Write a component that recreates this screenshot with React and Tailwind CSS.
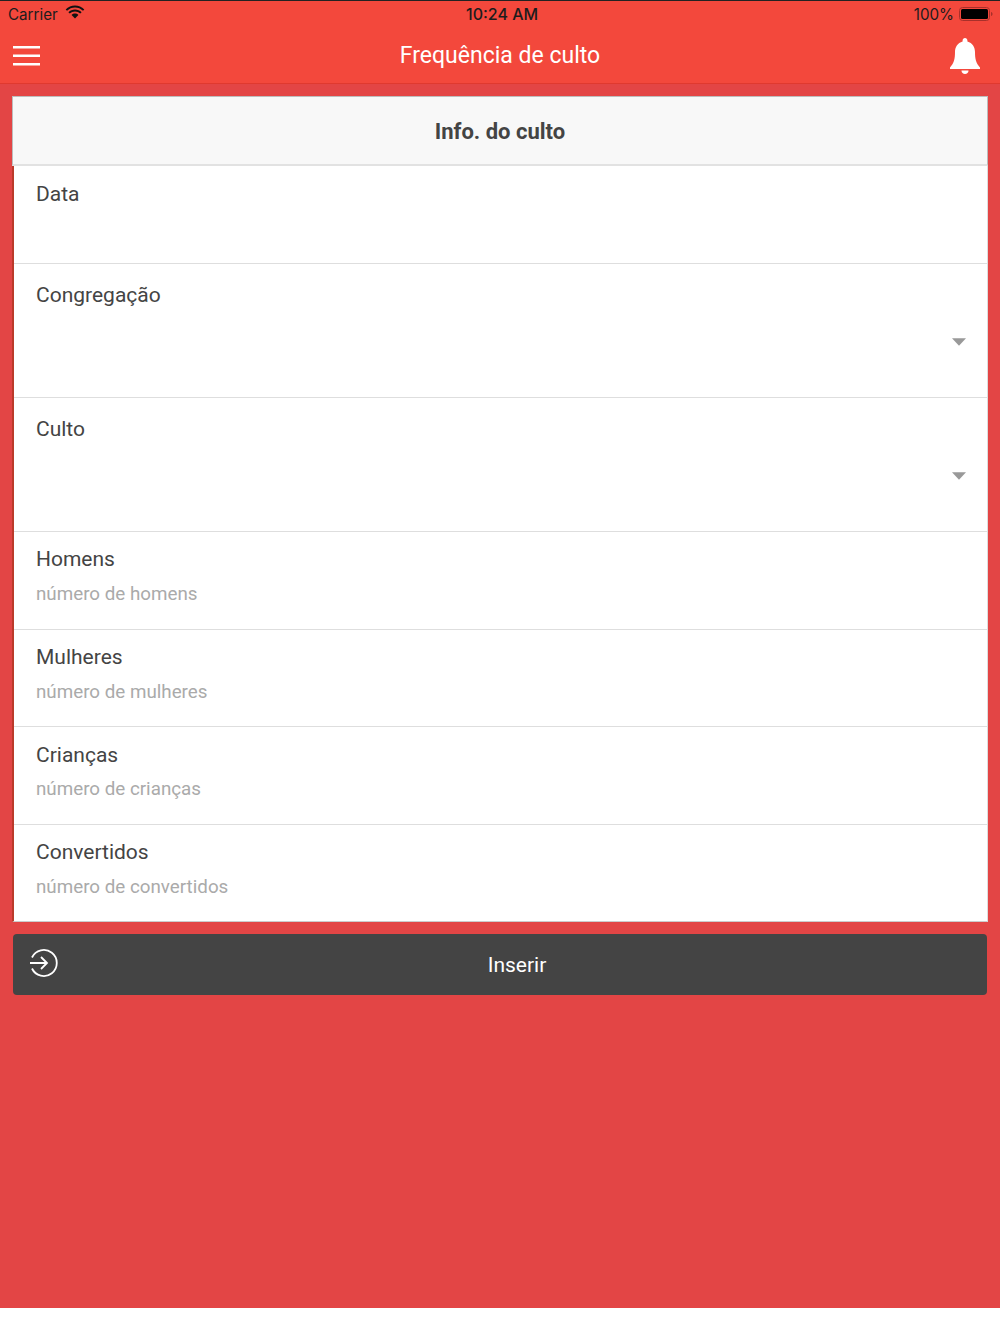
function Linha({ label, placeholder, altura, labelTop, gap, caretTop }) {
  return (
    <div className={`relative border-b border-b-[#dedede] ${altura} ${labelTop} pl-[22px]`}>
      <div className="text-[21px] leading-[28px] text-[#444]">{label}</div>
      {placeholder && <div className={`${gap} text-[18.800px] leading-[28px] text-[#aaa]`}>{placeholder}</div>}
      {caretTop && (
        <svg width="14" height="8" viewBox="0 0 13 7" className={`absolute right-[21px] ${caretTop}`}>
          <path d="M0 0h13L6.500 7z" fill="#999" />
        </svg>
      )}
    </div>
  );
}

export default function App() {
  return (
    <div className="flex h-[1334px] flex-col bg-white font-['Roboto',sans-serif]">
      <div className="flex h-[1308px] flex-col bg-[#e34545]">
        <div className="h-[84px] shrink-0 border-t border-t-[#222] border-b border-b-[#e0392f] bg-[#f3483c]">
          <div className="relative flex h-[26px] items-center justify-between pl-[8px] pr-[7px] pt-[2px] font-['Inter',sans-serif] text-[15.200px] text-[#1c1c1c]">
            <div className="flex items-center gap-[7px]">
              <span>Carrier</span>
              <svg width="20" height="15" viewBox="0 0 20 15" className="mb-[5px]">
                <path d="M10 2.500c3 0 5.800 1.200 8 3.300l1.300-1.400C16.800 2 13.500.600 10 .600S3.200 2 .700 4.400L2 5.800c2.200-2.100 5-3.300 8-3.300z" fill="#111" />
                <path d="M10 6.500c2 0 3.800.800 5.200 2.100l1.400-1.400C14.800 5.500 12.500 4.500 10 4.500s-4.800 1-6.600 2.700l1.400 1.400C6.200 7.300 8 6.500 10 6.500z" fill="#111" />
                <path d="M10 8.500c-1.300 0-2.500.500-3.400 1.400L10 13.500l3.400-3.600c-.9-.9-2.100-1.400-3.400-1.400z" fill="#111" />
              </svg>
            </div>
            <span className="absolute left-[466px] top-0 text-[16px] font-medium leading-[26px]">10:24 AM</span>
            <div className="flex items-center gap-[5px]">
              <span>100%</span>
              <svg width="34" height="14" viewBox="0 0 34 14" className="mb-[2px]">
                <rect x=".5" y=".5" width="30" height="13" rx="3" fill="none" stroke="#a8302a" />
                <rect x="2" y="2" width="27" height="10" rx="1.500" fill="#000" />
                <path d="M32 5c1 .3 1.500 1 1.500 2s-.5 1.700-1.500 2z" fill="#a8302a" />
              </svg>
            </div>
          </div>
          <div className="relative flex h-[56px] items-center justify-center pt-[2px]">
            <svg width="27" height="20" viewBox="0 0 27 20" className="absolute left-[13px] top-[19px]">
              <rect x="0" y="0" width="27" height="2.500" fill="#fff" />
              <rect x="0" y="8.500" width="27" height="2.500" fill="#fff" />
              <rect x="0" y="17" width="27" height="2.500" fill="#fff" />
            </svg>
            <span className="text-[23px] text-white">Frequência de culto</span>
            <svg width="30" height="36" viewBox="0 0 30 36" className="absolute right-[20px] top-[11px]">
              <path d="M15 0c1.400 0 2.400 1 2.400 2.500v1C22.500 5 25 9 25 14c0 7 1 11 5 15.500v1.500H0v-1.500C4 25 5 21 5 14c0-5 2.500-9 7.600-10.500v-1C12.600 1 13.600 0 15 0z" fill="#fff" />
              <path d="M11.500 32.500h7c0 2-1.500 3.500-3.500 3.500s-3.500-1.500-3.500-3.500z" fill="#fff" />
            </svg>
          </div>
        </div>

        <div className="flex flex-col gap-[12px] px-[12px] pt-[12px]">
          <div className="bg-white">
            <div className="flex h-[70px] items-center justify-center border border-[#bdbdbd] border-b-2 border-b-[#e2e2e2] bg-[#f8f8f8] pt-[2px] text-[22px] font-bold text-[#444]">
              Info. do culto
            </div>
            <div className="border-l-2 border-l-[#bb3a2a] border-r border-r-[#ddd] border-b border-b-[#ccc]">
              <Linha label="Data" altura="h-[98px]" labelTop="pt-[14px]" />
              <Linha label="Congregação" altura="h-[134px]" labelTop="pt-[17px]" caretTop="top-[74px]" />
              <Linha label="Culto" altura="h-[134px]" labelTop="pt-[17px]" caretTop="top-[74px]" />
              <Linha label="Homens" placeholder="número de homens" altura="h-[98px]" labelTop="pt-[13px]" gap="mt-[7px]" />
              <Linha label="Mulheres" placeholder="número de mulheres" altura="h-[97px]" labelTop="pt-[13px]" gap="mt-[7px]" />
              <Linha label="Crianças" placeholder="número de crianças" altura="h-[98px]" labelTop="pt-[14px]" gap="mt-[6px]" />
              <div className="h-[96px] pl-[22px] pt-[13px]">
                <div className="text-[21px] leading-[28px] text-[#444]">Convertidos</div>
                <div className="mt-[7px] text-[18.800px] leading-[28px] text-[#aaa]">número de convertidos</div>
              </div>
            </div>
          </div>

          <div className="relative mx-[1px] flex h-[61px] items-center justify-center rounded-[4px] bg-[#444] pl-[34px] pt-[2px] text-[21px] text-white">
            <svg width="30" height="30" viewBox="0 0 30 30" fill="none" stroke="#fff" strokeWidth="1.800" className="absolute left-[16px] top-[14px]">
              <path d="M3 9.500A13 13 0 1 1 3 20.500" />
              <path d="M1 15h17M12 9l6 6-6 6" />
            </svg>
            Inserir
          </div>
        </div>
      </div>
    </div>
  );
}
